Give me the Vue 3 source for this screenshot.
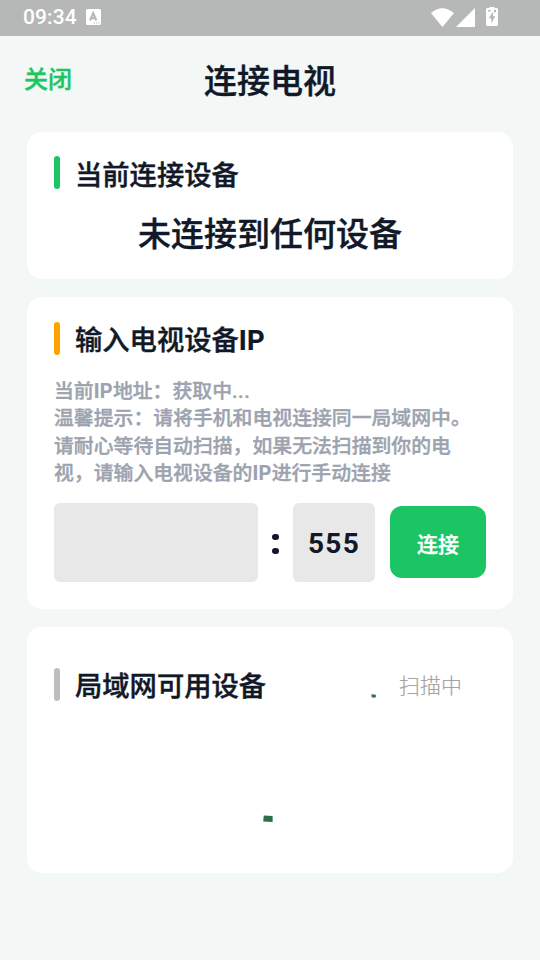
<script setup>
const notes = [
  [{ t: '当前' }, { t: 'IP', c: 'latin' }, { t: '地址：获取中' }, { t: '...', c: 'dots' }],
  [{ t: '温馨提示：请将手机和电视连接同一局域网中。' }],
  [{ t: '请耐心等待自动扫描，如果无法扫描到你的电' }],
  [{ t: '视，请输入电视设备的' }, { t: 'IP', c: 'latin' }, { t: '进行手动连接' }],
]
</script>

<template>
  <div class="screen">
    <div class="status">
      <span class="time">09:34</span>
      <svg class="ime" width="15" height="16" viewBox="0 0 15 16">
        <rect width="15" height="16" rx="1.5" fill="#fff" />
        <path d="M4 11.500 7.200 4 10.400 11.500M5 9.200h4.400" fill="none" stroke="#b6b8b7" stroke-width="2" />
        <path d="M7.500 14h1.200M10 14h1.200M12.300 14h1.200" stroke="#b6b8b7" stroke-width="1.200" />
      </svg>
      <svg class="signals" width="70" height="22" viewBox="0 0 70 22">
        <path d="M1 7Q12 -2.500 24 7L12.400 21Z" fill="#fff" />
        <path d="M26 21 45 2V21Z" fill="#fff" />
        <path d="M57.500 2h2V1h5v1h2a1.500 1.500 0 0 1 1.500 1.500v15a1.500 1.500 0 0 1-1.500 1.500h-9A1.500 1.500 0 0 1 56 18.500v-15A1.500 1.500 0 0 1 57.500 2Z" fill="#fff" />
        <path d="M63 5.500 58.800 12.200h2.500v5.300l4-7.200h-2.300ZM58 4h2.500v1.500H58ZM64 3.800h2v2.500h-2Z" fill="#b6b8b7" />
      </svg>
    </div>

    <header class="nav">
      <span class="close">关闭</span>
      <h1>连接电视</h1>
      <span></span>
    </header>

    <main>
      <section class="card current">
        <div class="heading"><i class="bar green"></i><h2>当前连接设备</h2></div>
        <p class="device">未连接到任何设备</p>
      </section>

      <section class="card manual">
        <div class="heading"><i class="bar orange"></i><h2>输入电视设备<b>IP</b></h2></div>
        <div class="notes">
          <p v-for="(n, k) in notes" :key="k"><span v-for="(p, j) in n" :key="j" :class="p.c">{{ p.t }}</span></p>
        </div>
        <div class="form">
          <div class="field ip"></div>
          <div class="colon"><i></i><i></i></div>
          <div class="field port">555</div>
          <button>连接</button>
        </div>
      </section>

      <section class="card lan">
        <div class="heading">
          <i class="bar gray"></i><h2>局域网可用设备</h2>
          <svg class="tick" width="5" height="4" viewBox="0 0 5 4"><path d="M.3 .3 4.800 .8V3.500H.8Z" fill="#2f6f43" /></svg>
          <span class="scan">扫描中</span>
        </div>
        <svg class="spinner" width="10" height="8" viewBox="0 0 10 8"><path d="M.8 .4 9.600 1V7L.2 6.500Z" fill="#2f6f43" /></svg>
      </section>
    </main>
  </div>
</template>

<style>
body {
  background: #f3f7f6;
}
</style>

<style scoped>
.screen {
  box-sizing: border-box;
  width: 540px;
  height: 960px;
  overflow: hidden;
  background: #f3f7f6;
  color: #111827;
  font-family: Roboto, "Noto Sans CJK SC", sans-serif;
  font-weight: 500;
}
h1, h2, p {
  margin: 0;
  font-weight: 500;
  white-space: nowrap;
}
h1, h2, .device, .close, .notes, button {
  -webkit-text-stroke: 0.4px currentColor;
}
h2 b, .latin {
  font-weight: 700;
  letter-spacing: 0.300px;
  -webkit-text-stroke: 0.200px currentColor;
}
.dots {
  letter-spacing: 0.600px;
}
.status {
  box-sizing: border-box;
  height: 36px;
  padding: 0 40px 0 23px;
  display: flex;
  align-items: flex-start;
  background: #b6b8b7;
  color: #fff;
}
.time {
  font-size: 21px;
  line-height: 34px;
  letter-spacing: 0.1px;
}
.ime {
  margin: 9px 0 0 9px;
}
.signals {
  margin: 6px 0 0 auto;
}
.nav {
  display: grid;
  grid-template-columns: 1fr auto 1fr;
  align-items: center;
  height: 90px;
  padding: 0 24px;
}
.close {
  color: #1bc563;
  font-size: 24px;
  padding-bottom: 7px;
}
h1 {
  padding-top: 2px;
  font-size: 33px;
  line-height: 44px;
}
main {
  display: flex;
  flex-direction: column;
  gap: 18px;
  padding: 6px 27px 0;
}
.card {
  box-sizing: border-box;
  padding: 0 27px;
  border-radius: 15px;
  background: #fff;
}
.current {
  height: 147px;
  padding-top: 24px;
}
.manual {
  height: 312px;
  padding-top: 25px;
}
.lan {
  height: 246px;
  padding-top: 41px;
}
.heading {
  display: flex;
  align-items: center;
  height: 33px;
}
.bar {
  width: 6px;
  height: 33px;
  margin-right: 15px;
  border-radius: 3px;
}
.green {
  background: #1bc563;
}
.orange {
  background: #ffa200;
}
.gray {
  background: #bdbdbd;
}
h2 {
  font-size: 27.300px;
  line-height: 33px;
  padding-top: 6px;
}
.current h2 {
  padding-top: 8px;
}
.device {
  margin-top: 24px;
  font-size: 33px;
  line-height: 44px;
  text-align: center;
}
.notes {
  margin-top: 23px;
  color: #9ca3af;
  font-size: 19.850px;
  line-height: 27.400px;
}
.form {
  display: flex;
  align-items: center;
  height: 80px;
  margin-top: 14.400px;
}
.field {
  box-sizing: border-box;
  height: 79px;
  border-radius: 6px;
  background: #e8e8e8;
}
.ip {
  width: 204px;
}
.colon {
  width: 35px;
  padding-top: 4px;
  display: flex;
  flex-direction: column;
  align-items: center;
  gap: 7.500px;
}
.colon i {
  width: 6.500px;
  height: 6.500px;
  border-radius: 50%;
  background: #111827;
}
.port {
  width: 82px;
  font-size: 28px;
  font-weight: 700;
  line-height: 82px;
  text-align: center;
  letter-spacing: 1.300px;
}
button {
  width: 96px;
  height: 72px;
  margin-left: 15px;
  padding: 1px 0 0;
  border: 0;
  border-radius: 12px;
  background: #1bc563;
  color: #fff;
  font: inherit;
  font-size: 21px;
}
.tick {
  margin: 22px 0 0 auto;
}
.scan {
  margin: -2px 24px 0 23px;
  color: #a4a4a4;
  font-size: 21px;
  font-weight: 300;
  -webkit-text-stroke: 0.200px currentColor;
}
.spinner {
  display: block;
  margin: 114px auto 0;
  transform: translateX(-2px);
}
</style>
